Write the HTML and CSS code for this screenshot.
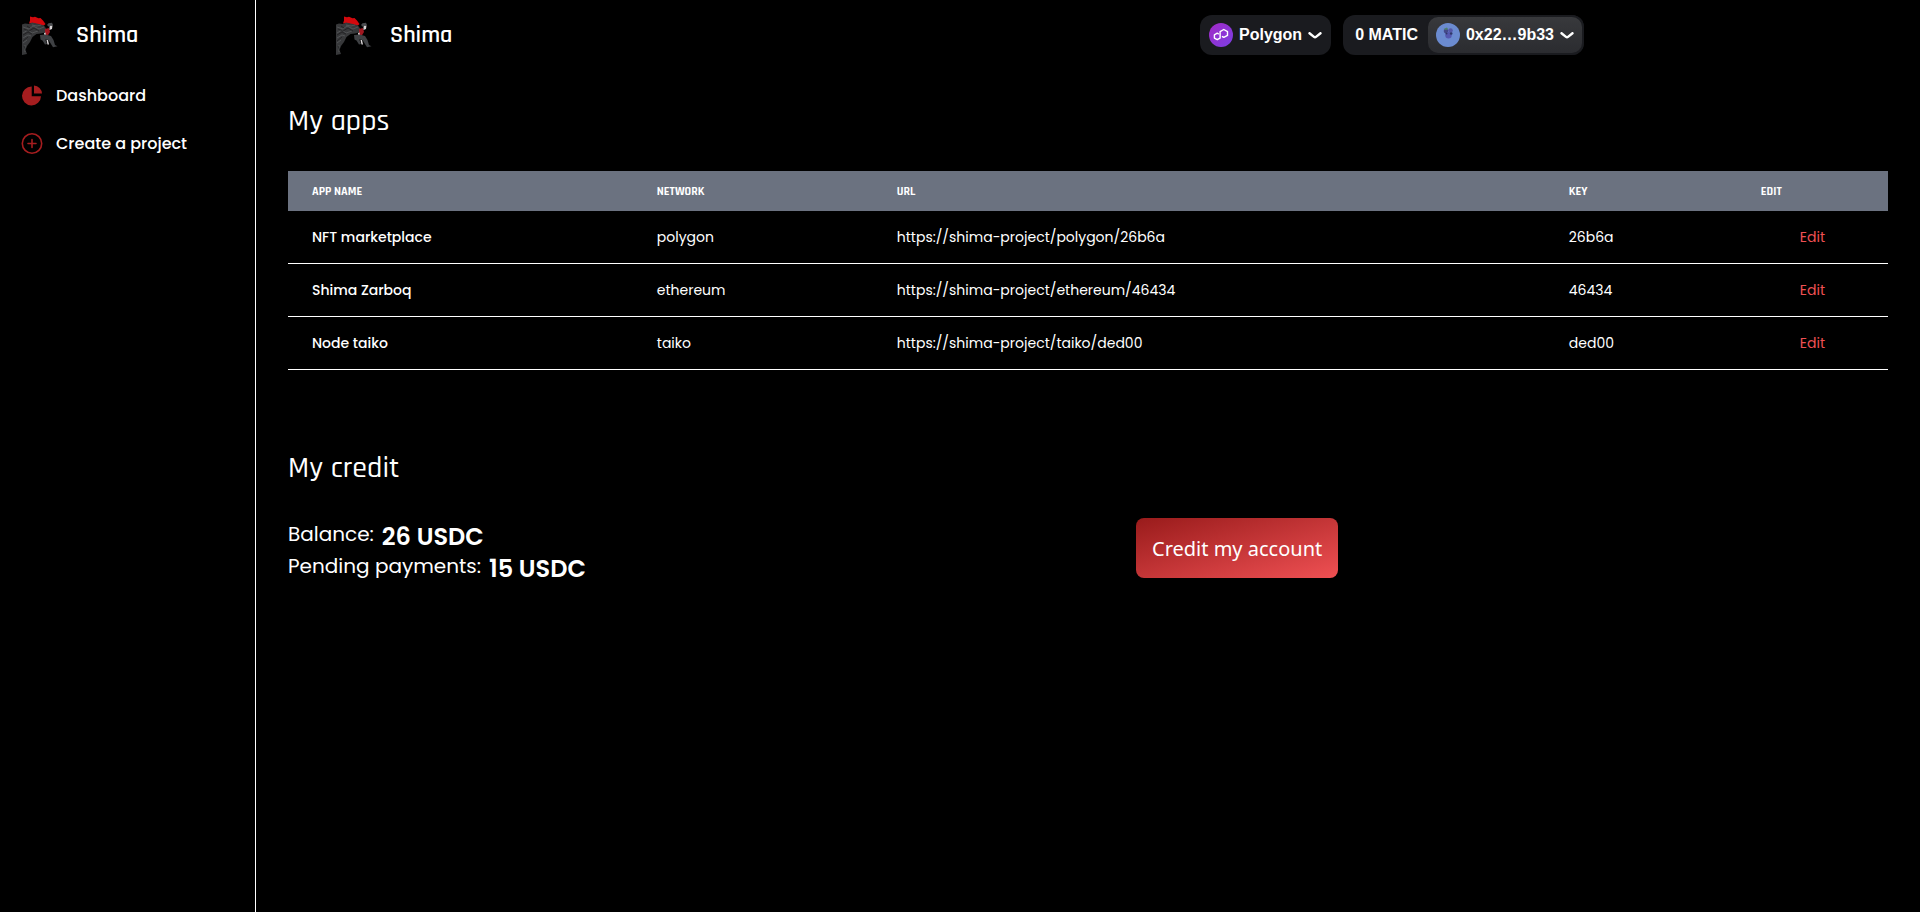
FILE: index.html
```html
<!DOCTYPE html>
<html lang="en">
<head>
<meta charset="utf-8">
<meta name="viewport" content="width=device-width, initial-scale=1">
<title>Shima</title>
<link rel="stylesheet" href="styles.css">
</head>
<body>
<svg class="defs" aria-hidden="true">
  <symbol id="shima-logo" viewBox="0 0 40 40">
    <path fill="#d3090d" d="M8 1.500l3 .8 2-.6 3.500 1.600 2-.4 2.500 2.700 2.500 3.400-1.500 1.500-6-1-5-1.500-4 .5 1-3z"/>
    <path fill="#37383a" d="M0 9.500l3-1 4 .5 3-1.500 7 1.500 5 1.500 2 3-1 4-4 1-4.500.5-4 3-2.500 5-3 4-1.500 4 1.500 4-5 1z"/>
    <path fill="none" stroke="#626466" stroke-width=".6" d="M1 12l6 2 4-3 6 3 5-2M1 18l5-3 4 3 6-2M1 23l5-3 3 1M10 10l5 1 4-1M1 28l4-3M3 30v7"/>
    <path fill="none" stroke="#151617" stroke-width=".6" d="M2 14l5 2 5-3 5 3M1 20l5-3 4 2M1 26l5-4M5 11l3 2M2 31l2 5"/>
    <path fill="#a01720" d="M23 14l4-1 1 4-2.500 4-2.500-.5z"/>
    <path fill="#d9d5d6" d="M27.500 10.500l3 0-.5 3.500-2.500 1zM22 18l1.500-.5.5 3.500-1.500 0zM24.500 25l1.500 0 1 4.500-1.500 0z"/>
    <path fill="#4b4d50" d="M25 10l1.500-1.800 3.500-.4 1.200 2.600-3 .2-.8 1.600z"/>
    <path fill="#3f4144" d="M18 20l5.500-.5 5.500 1.500 2.500 4 1.500 5 2.500 1.300-4.500 1-4.500-7.300-3.200-.5 1.700 4.500-2 .5-2.500-4-2-1z"/>
  </symbol>
  <symbol id="chevron" viewBox="0 0 14 7">
    <path fill="none" stroke="#fff" stroke-width="2.400" stroke-linecap="round" stroke-linejoin="round" d="M1.500 1.200L6 4.900a1.600 1.600 0 0 0 2 0l4.500-3.700"/>
  </symbol>
</svg>

<div class="layout">
  <header class="topbar">
    <div class="topbar-inner">
      <a class="brand" href="#">
        <svg class="brand-logo" aria-hidden="true"><use href="#shima-logo"/></svg>
        <span>Shima</span>
      </a>
      <div class="wallet">
        <button class="chain" type="button">
          <svg class="avatar" viewBox="0 0 24 24" aria-hidden="true">
            <defs><linearGradient id="poly" x1="0" y1="0" x2="1" y2="1"><stop offset="0" stop-color="#a229c5"/><stop offset="1" stop-color="#7b3fe4"/></linearGradient></defs>
            <circle cx="12" cy="12" r="12" fill="url(#poly)"/>
            <path fill="none" stroke="#fff" stroke-width="1.400" stroke-linejoin="round" d="M9.800 11.100L8.200 10.200 5.400 11.800v3.300l2.800 1.600 2.900-1.600V8.600l3.700-2.100 3.700 2.100v3.800l-3.700 2-1.900-1"/>
          </svg>
          <span>Polygon</span>
          <svg class="chevron" aria-hidden="true"><use href="#chevron"/></svg>
        </button>
        <button class="account" type="button">
          <span class="funds">0 MATIC</span>
          <span class="address">
            <svg class="avatar" viewBox="0 0 24 24" aria-hidden="true">
              <circle cx="12" cy="12" r="12" fill="#6b8bd0"/>
              <circle cx="10" cy="8" r="2.300" fill="#454a8a"/>
              <circle cx="14.500" cy="7.500" r="2.300" fill="#5558a8"/>
              <circle cx="12.500" cy="12.200" r="3.200" fill="#5558b0"/>
              <circle cx="15.200" cy="10.500" r="1.300" fill="#303768"/>
              <circle cx="10.500" cy="10.500" r="1" fill="#303768"/>
              <path d="M7.500 6l3.500-1.500 1 1.500-2 1z" fill="#4e8269"/>
            </svg>
            <span>0x22…9b33</span>
            <svg class="chevron" aria-hidden="true"><use href="#chevron"/></svg>
          </span>
        </button>
      </div>
    </div>
  </header>

  <aside class="sidebar">
    <a class="brand" href="#">
      <svg class="brand-logo" aria-hidden="true"><use href="#shima-logo"/></svg>
      <span>Shima</span>
    </a>
    <nav class="nav">
      <a class="nav-link" href="#">
        <svg class="nav-icon" viewBox="0 0 20 20" aria-hidden="true"><path fill="#a51d1f" d="M9.700 0.500A9.500 9.500 0 1 0 19 10.200H9.700zM12 -.5v8h8A8.500 8.500 0 0 0 12 -.5z"/></svg>
        <span>Dashboard</span>
      </a>
      <a class="nav-link" href="#">
        <svg class="nav-icon" viewBox="0 0 20 20" aria-hidden="true"><circle cx="10" cy="9.500" r="9.700" fill="none" stroke="#a51d1f" stroke-width="1.600"/><path stroke="#a51d1f" stroke-width="1.600" stroke-linecap="round" d="M10 5.500v8M6 9.500h8"/></svg>
        <span>Create a project</span>
      </a>
    </nav>
  </aside>

  <main class="content">
    <section>
      <h1 class="title">My apps</h1>
      <table class="apps">
        <colgroup><col class="c-name"><col class="c-network"><col class="c-url"><col class="c-key"><col class="c-edit"></colgroup>
        <thead>
          <tr><th scope="col">App name</th><th scope="col">Network</th><th scope="col">URL</th><th scope="col">Key</th><th scope="col">Edit</th></tr>
        </thead>
        <tbody>
          <tr><th scope="row">NFT marketplace</th><td>polygon</td><td>https://shima-project/polygon/26b6a</td><td>26b6a</td><td class="action"><a href="#">Edit</a></td></tr>
          <tr><th scope="row">Shima Zarboq</th><td>ethereum</td><td>https://shima-project/ethereum/46434</td><td>46434</td><td class="action"><a href="#">Edit</a></td></tr>
          <tr><th scope="row">Node taiko</th><td>taiko</td><td>https://shima-project/taiko/ded00</td><td>ded00</td><td class="action"><a href="#">Edit</a></td></tr>
        </tbody>
      </table>
    </section>
    <section>
      <h2 class="title">My credit</h2>
      <div class="credit">
        <div>
          <p class="amount">Balance: <strong>26 USDC</strong></p>
          <p class="amount">Pending payments: <strong>15 USDC</strong></p>
        </div>
        <div><button class="credit-button" type="button">Credit my account</button></div>
      </div>
    </section>
  </main>
</div>
</body>
</html>
```
FILE: styles.css
```css
* { box-sizing: border-box; }

body {
  margin: 0;
  background: #000;
  color: #fff;
  font: 400 14px/20px Poppins, Inter, sans-serif;
}

a { color: inherit; text-decoration: none; }
button { border: 0; color: inherit; cursor: pointer; }
svg { flex: none; }
.defs { position: absolute; width: 0; height: 0; }

.layout {
  display: grid;
  grid-template-columns: 256px minmax(0, 1fr);
  grid-template-rows: auto 1fr;
  min-height: 100vh;
}

.topbar { grid-area: 1 / 1 / 2 / 3; }

.topbar-inner {
  display: flex;
  align-items: center;
  justify-content: space-between;
  max-width: 1280px;
  margin: 0 auto;
  padding: 15px 16px 16px;
}

.brand {
  display: flex;
  align-items: center;
  gap: 14px;
  height: 40px;
  font: 600 24px/32px Rajdhani, Roboto, sans-serif;
}

.brand-logo { width: 40px; height: 40px; }

.wallet {
  display: flex;
  gap: 12px;
}

.chain, .account {
  display: flex;
  align-items: center;
  height: 40px;
  border-radius: 12px;
  background: #1a1b1f;
  font: 700 16px/20px "Liberation Sans", sans-serif;
}

.chain { gap: 6px; padding: 0 9px; }
.account { padding: 0; }
.funds { padding: 0 8px 0 12px; }

.address {
  display: flex;
  align-items: center;
  gap: 6px;
  height: 40px;
  padding: 0 8px;
  border: 2px solid #1a1b1f;
  border-radius: 12px;
  background: linear-gradient(#38393c, #2b2c30);
}

.avatar { width: 24px; height: 24px; }
.chevron { width: 14px; height: 7px; }

.sidebar {
  grid-area: 1 / 1 / 3 / 2;
  padding: 15px 22px;
  border-right: 1px solid #fff;
}

.nav { padding-top: 17px; }

.nav-link {
  display: flex;
  align-items: center;
  gap: 14px;
  height: 48px;
  font-size: 16px;
  line-height: 24px;
  font-weight: 500;
}

.nav-icon { width: 20px; height: 20px; overflow: visible; }

.content {
  grid-area: 2 / 2 / 3 / 3;
  padding: 32px;
}

.title {
  margin: 0 0 32px;
  font: 500 30px/36px Rajdhani, Roboto, sans-serif;
}

.apps {
  width: 100%;
  margin-bottom: 80px;
  border-collapse: collapse;
  table-layout: fixed;
  text-align: left;
}

.c-name { width: 21.55%; }
.c-network { width: 15%; }
.c-url { width: 42%; }
.c-key { width: 12%; }
.c-edit { width: 9.45%; }

.apps th, .apps td { padding: 16px 24px; }

.apps thead th {
  padding: 11px 24px 9px;
  background: #6b7280;
  font: 700 12px/20px Rajdhani, Roboto, sans-serif;
  text-transform: uppercase;
}

.apps tbody tr { border-bottom: 1px solid #fff; }
.apps tbody th { font-weight: 500; }
.apps .action { color: #ef5053; text-align: center; }

.credit {
  display: grid;
  grid-template-columns: 1fr 1fr;
  gap: 96px;
}

.amount {
  display: flex;
  align-items: center;
  gap: 8px;
  margin: 0;
  font-size: 20px;
  line-height: 32px;
}

.amount strong {
  padding-top: 6px;
  font-size: 24px;
  line-height: 26px;
  font-weight: 600;
}

.credit-button {
  padding: 17px 16px 15px;
  border-radius: 8px;
  background: linear-gradient(to bottom right, #991b1b, #ef5053);
  font: 400 20px/28px "Noto Sans", sans-serif;
}
```
